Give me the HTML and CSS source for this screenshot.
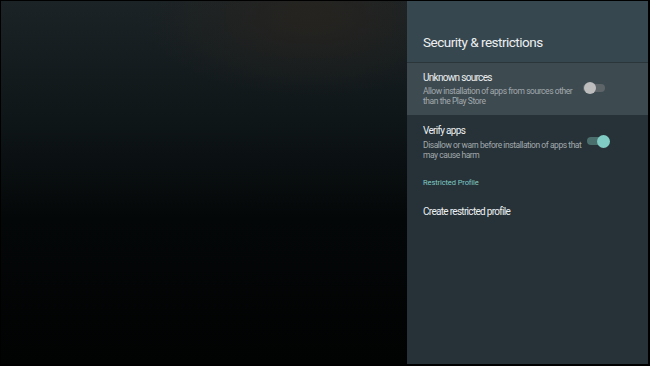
FILE: index.html
```html
<!DOCTYPE html>
<html lang="en">

<head>
    <meta charset="UTF-8">
    <meta name="viewport" content="width=device-width, initial-scale=1.0">
    <title>Security &amp; restrictions</title>
    <link rel="stylesheet" href="styles.css">
</head>

<body>
    <div id="screen">
        <div id="backdrop"></div>
        <div id="panel">
            <div id="panel-header">
                <h1>Security &amp; restrictions</h1>
            </div>
            <div class="item selected">
                <div class="item-text">
                    <div class="item-title">Unknown sources</div>
                    <div class="item-desc">Allow installation of apps from sources other than the Play Store</div>
                </div>
                <div class="switch"><span class="thumb"></span></div>
            </div>
            <div class="item">
                <div class="item-text">
                    <div class="item-title">Verify apps</div>
                    <div class="item-desc">Disallow or warn before installation of apps that may cause harm</div>
                </div>
                <div class="switch on"><span class="thumb"></span></div>
            </div>
            <div class="section">Restricted Profile</div>
            <div class="item single">
                <div class="item-title">Create restricted profile</div>
            </div>
        </div>
    </div>
</body>

</html>
```

FILE: styles.css
```css
html,
body {
    height: 100%;
    margin: 0;
    background: #000;
}

#screen {
    height: 366px;
    width: 650px;
    box-sizing: border-box;
    border: 1px solid #000;
    border-bottom-width: 2px;
    border-right-width: 2px;
    display: flex;
    font-family: Roboto, "Noto Sans", sans-serif;
}

#backdrop {
    flex: 1;
    background:
        radial-gradient(ellipse 170px 80px at 310px 15px, rgba(42, 36, 30, 0.75), transparent),
        linear-gradient(to bottom, #1b2326 0%, #0e1517 35%, #040708 60%, #010202 100%);
}

#panel {
    width: 241px;
    background: #263238;
    display: flex;
    flex-direction: column;
}

#panel-header {
    height: 61px;
    background: #37474f;
    border-bottom: 1px solid #2b363b;
    padding: 0 16px;
    display: flex;
    align-items: flex-end;
}

#panel-header h1 {
    margin: 0 0 12px;
    font-size: 13.5px;
    line-height: 16px;
    font-weight: 400;
    color: #eceff1;
    letter-spacing: -0.5px;
}

.item {
    display: flex;
    align-items: flex-start;
    padding: 10px 16px 0;
}

.item.selected {
    background: #3d4a50;
    padding-top: 9px;
    padding-bottom: 9px;
}

.item-text {
    width: 160px;
}

.item-title {
    font-size: 10px;
    letter-spacing: -0.7px;
    color: #eceff1;
    line-height: 12px;
}

.item-desc {
    margin-top: 2px;
    font-size: 8.5px;
    line-height: 10px;
    letter-spacing: -0.45px;
    color: #a2a9ad;
}

.item:not(.selected) .item-desc {
    margin-top: 3px;
}

.switch {
    width: 22px;
    height: 8px;
    border-radius: 4px;
    background: #5d6569;
    position: relative;
    margin: 12px 0 0 0;
}

.switch .thumb {
    position: absolute;
    left: 1px;
    top: -2px;
    width: 12px;
    height: 12px;
    border-radius: 50%;
    background: #bdbdbd;
}

.switch.on {
    background: #4a6f6d;
    margin-left: 4px;
}

.switch.on .thumb {
    left: 10px;
    top: -2.5px;
    width: 13px;
    height: 13px;
    background: #80cbc4;
}

.section {
    padding: 18px 16px 0;
    font-size: 7.5px;
    letter-spacing: -0.1px;
    color: #80cbc4;
    line-height: 10px;
}

.item.single {
    padding-top: 18px;
}
```
